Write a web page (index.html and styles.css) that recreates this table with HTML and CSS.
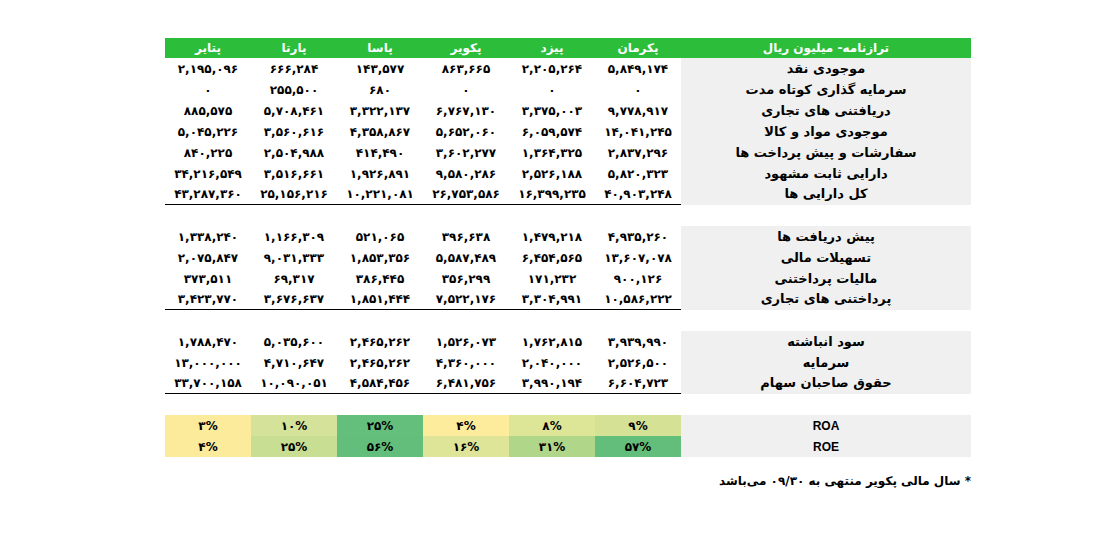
FILE: index.html
```html
<!DOCTYPE html>
<html lang="fa">
<head>
<meta charset="utf-8">
<title>ترازنامه</title>
<link rel="stylesheet" href="styles.css">
</head>
<body>
<div class="page">
<table class="sheet" dir="rtl">
<colgroup>
<col class="c-label"><col class="c-num"><col class="c-num"><col class="c-num"><col class="c-num"><col class="c-num"><col class="c-num">
</colgroup>
<thead>
<tr class="head">
<th>ترازنامه- میلیون ریال</th><th>پکرمان</th><th>پیزد</th><th>پکویر</th><th>پاسا</th><th>پارتا</th><th>پتایر</th>
</tr>
</thead>
<tbody>
<tr><th>موجودی نقد</th><td>۵,۸۴۹,۱۷۴</td><td>۲,۲۰۵,۲۶۴</td><td>۸۶۳,۶۶۵</td><td>۱۴۳,۵۷۷</td><td>۶۶۶,۲۸۴</td><td>۲,۱۹۵,۰۹۶</td></tr>
<tr><th>سرمایه گذاری کوتاه مدت</th><td>۰</td><td>۰</td><td>۰</td><td>۶۸۰</td><td>۲۵۵,۵۰۰</td><td>۰</td></tr>
<tr><th>دریافتنی های تجاری</th><td>۹,۷۷۸,۹۱۷</td><td>۳,۳۷۵,۰۰۳</td><td>۶,۷۶۷,۱۳۰</td><td>۳,۳۲۲,۱۳۷</td><td>۵,۷۰۸,۴۶۱</td><td>۸۸۵,۵۷۵</td></tr>
<tr><th>موجودی مواد و کالا</th><td>۱۴,۰۴۱,۲۴۵</td><td>۶,۰۵۹,۵۷۴</td><td>۵,۶۵۲,۰۶۰</td><td>۴,۳۵۸,۸۶۷</td><td>۳,۵۶۰,۶۱۶</td><td>۵,۰۴۵,۲۲۶</td></tr>
<tr><th>سفارشات و پیش پرداخت ها</th><td>۲,۸۳۷,۲۹۶</td><td>۱,۳۶۴,۳۲۵</td><td>۳,۶۰۲,۲۷۷</td><td>۴۱۴,۴۹۰</td><td>۲,۵۰۴,۹۸۸</td><td>۸۴۰,۲۲۵</td></tr>
<tr><th>دارایی ثابت مشهود</th><td>۵,۸۲۰,۳۲۳</td><td>۲,۵۲۶,۱۸۸</td><td>۹,۵۸۰,۲۸۶</td><td>۱,۹۲۶,۸۹۱</td><td>۳,۵۱۶,۶۶۱</td><td>۳۴,۲۱۶,۵۴۹</td></tr>
<tr class="total"><th>کل دارایی ها</th><td>۴۰,۹۰۳,۲۴۸</td><td>۱۶,۳۹۹,۲۳۵</td><td>۲۶,۷۵۳,۵۸۶</td><td>۱۰,۲۲۱,۰۸۱</td><td>۲۵,۱۵۶,۲۱۶</td><td>۴۳,۲۸۷,۳۶۰</td></tr>
<tr class="gap"><td colspan="7"></td></tr>
<tr><th>پیش دریافت ها</th><td>۴,۹۳۵,۲۶۰</td><td>۱,۴۷۹,۲۱۸</td><td>۳۹۶,۶۳۸</td><td>۵۲۱,۰۶۵</td><td>۱,۱۶۶,۳۰۹</td><td>۱,۳۳۸,۲۴۰</td></tr>
<tr><th>تسهیلات مالی</th><td>۱۳,۶۰۷,۰۷۸</td><td>۶,۴۵۴,۵۶۵</td><td>۵,۵۸۷,۴۸۹</td><td>۱,۸۵۳,۳۵۶</td><td>۹,۰۳۱,۳۳۳</td><td>۲,۰۷۵,۸۴۷</td></tr>
<tr><th>مالیات پرداختنی</th><td>۹۰۰,۱۲۶</td><td>۱۷۱,۲۳۲</td><td>۳۵۶,۲۹۹</td><td>۳۸۶,۴۴۵</td><td>۶۹,۳۱۷</td><td>۳۷۳,۵۱۱</td></tr>
<tr class="total"><th>پرداختنی های تجاری</th><td>۱۰,۵۸۶,۲۲۲</td><td>۳,۳۰۴,۹۹۱</td><td>۷,۵۲۲,۱۷۶</td><td>۱,۸۵۱,۴۴۴</td><td>۳,۶۷۶,۶۳۷</td><td>۳,۴۲۳,۷۷۰</td></tr>
<tr class="gap"><td colspan="7"></td></tr>
<tr><th>سود انباشته</th><td>۳,۹۳۹,۹۹۰</td><td>۱,۷۶۲,۸۱۵</td><td>۱,۵۲۶,۰۷۳</td><td>۲,۴۶۵,۲۶۲</td><td>۵,۰۳۵,۶۰۰</td><td>۱,۷۸۸,۴۷۰</td></tr>
<tr><th>سرمایه</th><td>۲,۵۲۶,۵۰۰</td><td>۲,۰۴۰,۰۰۰</td><td>۴,۳۶۰,۰۰۰</td><td>۲,۴۶۵,۲۶۲</td><td>۴,۷۱۰,۶۴۷</td><td>۱۳,۰۰۰,۰۰۰</td></tr>
<tr class="total"><th>حقوق صاحبان سهام</th><td>۶,۶۰۴,۷۲۳</td><td>۳,۹۹۰,۱۹۴</td><td>۶,۴۸۱,۷۵۶</td><td>۴,۵۸۴,۴۵۶</td><td>۱۰,۰۹۰,۰۵۱</td><td>۳۳,۷۰۰,۱۵۸</td></tr>
<tr class="gap"><td colspan="7"></td></tr>
<tr class="ratio"><th class="latin">ROA</th><td class="s9">۹%</td><td class="s8">۸%</td><td class="s4">۴%</td><td class="s25g">۲۵%</td><td class="s10">۱۰%</td><td class="s3">۳%</td></tr>
<tr class="ratio"><th class="latin">ROE</th><td class="s57">۵۷%</td><td class="s31">۳۱%</td><td class="s16">۱۶%</td><td class="s56">۵۶%</td><td class="s25">۲۵%</td><td class="s3">۴%</td></tr>
</tbody>
</table>
<p class="note" dir="rtl">* سال مالی پکویر منتهی به ۰۹/۳۰ می‌باشد</p>
</div>
</body>
</html>
```
FILE: styles.css
```css
html, body {
  margin: 0;
  padding: 0;
  background: #ffffff;
}
body {
  font-family: "DejaVu Sans", "Noto Sans", sans-serif;
  color: #000;
}
.page {
  padding: 38px 0 0 165px;
  width: 806px;
}
.sheet {
  border-collapse: collapse;
  table-layout: fixed;
  width: 806px;
  font-size: 12px;
  font-weight: bold;
}
.c-label { width: 290px; }
.c-num { width: 86px; }
.sheet th, .sheet td {
  padding: 0;
  height: 21px;
  line-height: 14px;
  text-align: center;
  vertical-align: middle;
  white-space: nowrap;
  font-weight: bold;
}
.head th {
  height: 20px;
  background: #2cbe3b;
  color: #ffffff;
  font-size: 12px;
}
tbody th {
  background: #f0f0f0;
  font-size: 13px;
}
.total td, .total th {
  height: 20px;
}
.total td {
  border-bottom: 1px solid #000;
}
.gap td {
  background: #fff;
}
.latin {
  font-family: "Liberation Sans", "DejaVu Sans", sans-serif;
}
tbody th.latin {
  font-size: 12px;
}
.s3 { background: #fdeb9c; }
.s4 { background: #fdec9b; }
.s8 { background: #dde597; }
.s9 { background: #d5e195; }
.s10 { background: #d4e29a; }
.s25g { background: #64be7c; }
.s57 { background: #63be7b; }
.s31 { background: #b0d68a; }
.s16 { background: #dee598; }
.s56 { background: #63be7b; }
.s25 { background: #c7de93; }
.note {
  margin: 17px 0 0;
  text-align: right;
  font-size: 12px;
  font-weight: bold;
}
```
